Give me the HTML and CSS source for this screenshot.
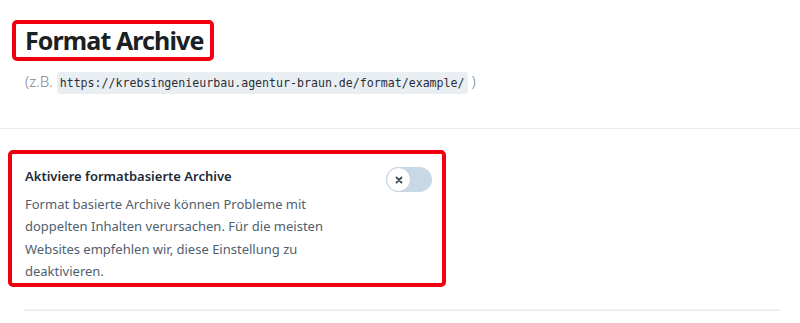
FILE: index.html
```html
<!DOCTYPE html>
<html lang="de">
<head>
<meta charset="utf-8">
<link rel="stylesheet" href="styles.css">
</head>
<body>
<section class="header">
  <div class="mark mark-title"><h1 class="title">Format Archive</h1></div>
  <p class="example">(z.B. <code class="code">https://krebsingenieurbau.agentur-braun.de/format/example/</code> )</p>
</section>
<section class="settings">
  <div class="mark mark-setting">
    <div class="setting">
      <div class="setting-text">
        <h2 class="setting-title">Aktiviere formatbasierte Archive</h2>
        <p class="setting-desc">Format basierte Archive können Probleme mit doppelten Inhalten verursachen. Für die meisten Websites empfehlen wir, diese Einstellung zu deaktivieren.</p>
      </div>
      <div class="toggle">
        <span class="knob">
          <svg width="10" height="10" viewBox="0 0 10 10"><path d="M2.5 2.5 L7.5 7.5 M7.5 2.5 L2.5 7.5" stroke="#3d4a5a" stroke-width="1.8" stroke-linecap="round"/></svg>
        </span>
      </div>
    </div>
  </div>
  <div class="divider"></div>
</section>
</body>
</html>
```
FILE: styles.css
```css
* { box-sizing: border-box; }
html, body { margin: 0; padding: 0; background: #fff; }
body {
  font-family: "Noto Sans", "Open Sans", sans-serif;
  color: #1d2327;
}
.header {
  padding: 20px 0 0 12px;
  height: 129px;
  border-bottom: 1px solid #ececec;
}
.mark {
  border: 4px solid #f0000e;
  border-radius: 5px;
}
.mark-title {
  display: inline-block;
  padding: 0 7px 0 9px;
}
.title {
  margin: 0;
  font-size: 25px;
  line-height: 33px;
  font-weight: 700;
  color: #1a1f24;
  letter-spacing: -0.9px;
}
.example {
  margin: 9px 0 0 13px;
  font-size: 15px;
  line-height: 22px;
  color: #7a8591;
  font-weight: 300;
}
.code {
  font-family: "DejaVu Sans Mono", "Liberation Mono", monospace;
  font-size: 11.6px;
  background: #e9eef2;
  color: #2a2f35;
  padding: 4px 3px;
  border-radius: 3px;
}
.settings {
  padding: 21px 0 0 8px;
}
.mark-setting {
  width: 438px;
  padding: 10px 10px 1px 13px;
}
.setting {
  display: flex;
  justify-content: space-between;
  align-items: flex-start;
}
.setting-title {
  margin: 3px 0 0;
  font-size: 13px;
  line-height: 18px;
  font-weight: 600;
  color: #1e2a36;
}
.setting-desc {
  margin: 8px 0 0;
  width: 300px;
  font-size: 13px;
  line-height: 22.3px;
  color: #50606f;
}
.toggle {
  width: 46px;
  height: 25px;
  border-radius: 13px;
  background: #c9d8e6;
  margin-top: 3px;
  display: flex;
  align-items: center;
}
.knob {
  width: 25px;
  height: 25px;
  border-radius: 50%;
  background: #fff;
  border: 1px solid #c0cfdd;
  display: flex;
  align-items: center;
  justify-content: center;
}
.divider {
  margin: 22px 20px 0 16px;
  height: 2px;
  border-top: 1px solid #f6f6f6;
  border-bottom: 1px solid #e9e9e9;
}
```
